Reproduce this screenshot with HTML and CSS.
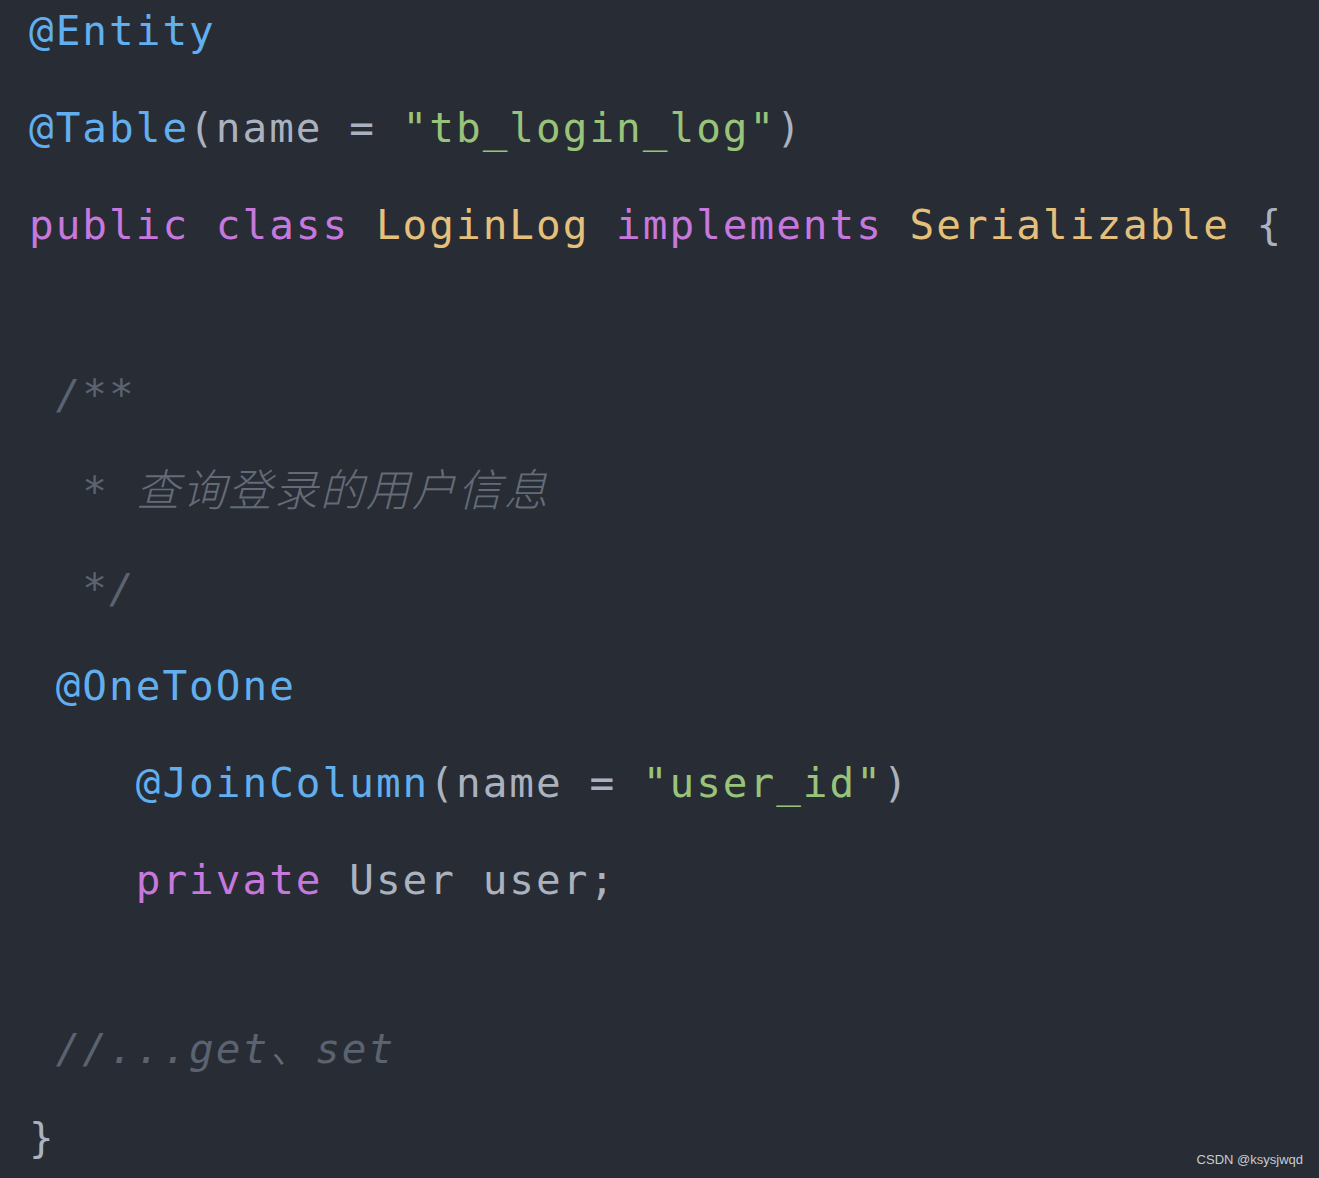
FILE: index.html
```html
<!DOCTYPE html>
<html lang="zh">
<head>
<meta charset="utf-8">
<title>LoginLog</title>
<link rel="stylesheet" href="styles.css">
</head>
<body>
<main class="code">
  <div class="line"><span class="ann">@Entity</span></div>
  <div class="line"><span class="ann">@Table</span><span class="pun">(</span><span class="txt">name</span><span class="pun"> = </span><span class="str">"tb_login_log"</span><span class="pun">)</span></div>
  <div class="line"><span class="kw">public</span> <span class="kw">class</span> <span class="cls">LoginLog</span> <span class="kw">implements</span> <span class="cls">Serializable</span> <span class="pun">{</span></div>
  <div class="blank"></div>
  <div class="line"><span class="com"> /**</span></div>
  <div class="line"><span class="com">  * <span class="cjk">查询登录的用户信息</span></span></div>
  <div class="line"><span class="com">  */</span></div>
  <div class="line"><span class="ann"> @OneToOne</span></div>
  <div class="line"><span class="ann">    @JoinColumn</span><span class="pun">(</span><span class="txt">name</span><span class="pun"> = </span><span class="str">"user_id"</span><span class="pun">)</span></div>
  <div class="line"><span class="kw">    private</span> <span class="txt">User user;</span></div>
  <div class="blank tight"></div>
  <div class="line short"><span class="com"> //...get<span class="cjk">、</span>set</span></div>
  <div class="line"><span class="pun">}</span></div>
</main>
<div class="mark">CSDN @ksysjwqd</div>
</body>
</html>
```

FILE: styles.css
```css
html, body {
  margin: 0;
  padding: 0;
  background: #282c34;
}

body {
  width: 1319px;
  height: 1178px;
  position: relative;
  overflow: hidden;
}

.code {
  display: flex;
  flex-direction: column;
  padding: 7px 0 0 29px;
  font-family: "DejaVu Sans Mono", "Noto Sans CJK SC", monospace;
  font-size: 41px;
  letter-spacing: 2px;
  line-height: 48px;
  color: #abb2bf;
}

.line {
  height: 97px;
  white-space: pre;
}

.line.short {
  height: 89px;
}

.blank {
  height: 73px;
}

.blank.tight {
  height: 72px;
}

.ann { color: #61afef; }
.str { color: #98c379; }
.kw  { color: #c678dd; }
.cls { color: #e5c07b; }
.pun { color: #abb2bf; }
.txt { color: #abb2bf; }

.com {
  color: #5c6370;
  font-style: italic;
}

.cjk {
  font-family: "Noto Sans CJK SC", sans-serif;
  font-size: 44px;
  line-height: 36px;
  font-weight: 300;
  color: #646b77;
}

.mark {
  position: absolute;
  right: 16px;
  bottom: 10px;
  font-family: "Liberation Sans", Arial, sans-serif;
  font-size: 13px;
  line-height: 16px;
  color: #c9ccd1;
}
```
